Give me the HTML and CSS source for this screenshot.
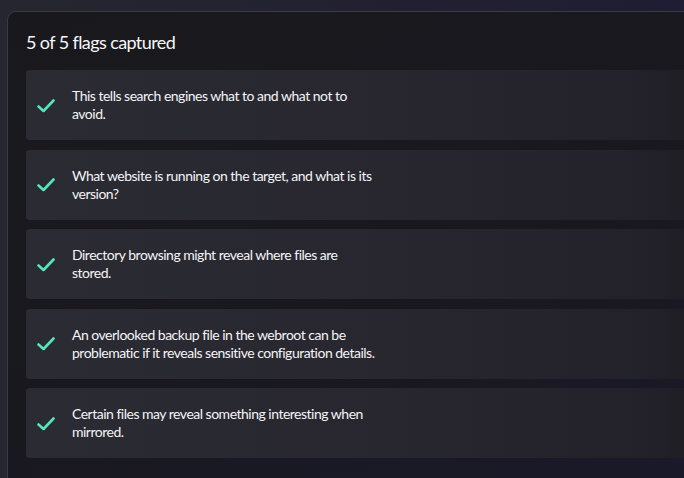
FILE: index.html
```html
<!DOCTYPE html>
<html>
<head>
<meta charset="utf-8">
<link rel="stylesheet" href="styles.css">
</head>
<body>
<div class="card">
  <h2 class="title">5 of 5 flags captured</h2>
  <ul class="list">
    <li class="item">
      <svg class="check" viewBox="0 0 18 14" width="18" height="14"><path d="M1.5 7.5 L6.5 12 L16.5 1.5" fill="none" stroke="#56e3bd" stroke-width="2.6" stroke-linecap="round" stroke-linejoin="round"/></svg>
      <p class="text">This tells search engines what to and what not to<br>avoid.</p>
    </li>
    <li class="item">
      <svg class="check" viewBox="0 0 18 14" width="18" height="14"><path d="M1.5 7.5 L6.5 12 L16.5 1.5" fill="none" stroke="#56e3bd" stroke-width="2.6" stroke-linecap="round" stroke-linejoin="round"/></svg>
      <p class="text">What website is running on the target, and what is its<br>version?</p>
    </li>
    <li class="item">
      <svg class="check" viewBox="0 0 18 14" width="18" height="14"><path d="M1.5 7.5 L6.5 12 L16.5 1.5" fill="none" stroke="#56e3bd" stroke-width="2.6" stroke-linecap="round" stroke-linejoin="round"/></svg>
      <p class="text">Directory browsing might reveal where files are<br>stored.</p>
    </li>
    <li class="item">
      <svg class="check" viewBox="0 0 18 14" width="18" height="14"><path d="M1.5 7.5 L6.5 12 L16.5 1.5" fill="none" stroke="#56e3bd" stroke-width="2.6" stroke-linecap="round" stroke-linejoin="round"/></svg>
      <p class="text">An overlooked backup file in the webroot can be<br>problematic if it reveals sensitive configuration details.</p>
    </li>
    <li class="item">
      <svg class="check" viewBox="0 0 18 14" width="18" height="14"><path d="M1.5 7.5 L6.5 12 L16.5 1.5" fill="none" stroke="#56e3bd" stroke-width="2.6" stroke-linecap="round" stroke-linejoin="round"/></svg>
      <p class="text">Certain files may reveal something interesting when<br>mirrored.</p>
    </li>
  </ul>
</div>
</body>
</html>
```
FILE: styles.css
```css
html, body {
  margin: 0;
  padding: 0;
  height: 100%;
}
body {
  background: linear-gradient(90deg, #262630 0%, #222030 60%, #1f1d33 100%);
  font-family: Lato, "Open Sans", sans-serif;
  color: #f4f4f6;
  overflow: hidden;
  padding: 11px 0 0 7px;
  box-sizing: border-box;
}
.card {
  width: 740px;
  height: 520px;
  box-sizing: border-box;
  border: 1px solid #3b3a44;
  border-radius: 9px;
  background: linear-gradient(160deg, #19191d 0%, #19181f 55%, #1a1a2c 100%);
  padding: 19px 0 0 18px;
}
.title {
  margin: 0;
  font-size: 18px;
  line-height: 22px;
  font-weight: 400;
  letter-spacing: -0.6px;
  color: #f6f6f8;
}
.list {
  list-style: none;
  margin: 17px 0 0 0;
  padding: 0;
  display: flex;
  flex-direction: column;
  gap: 9.5px;
}
.item {
  height: 70px;
  box-sizing: border-box;
  display: flex;
  align-items: center;
  border-radius: 4px;
  background: linear-gradient(90deg, #2b2b33 0%, #28272f 50%, #232129 85%, #1c1b21 100%);
  padding-left: 11px;
}
.check {
  flex: none;
  margin-top: 1px;
}
.text {
  margin: 0 0 0 17px;
  width: 340px;
  font-size: 14px;
  line-height: 18px;
  letter-spacing: -0.5px;
  color: #f4f4f6;
}
```
